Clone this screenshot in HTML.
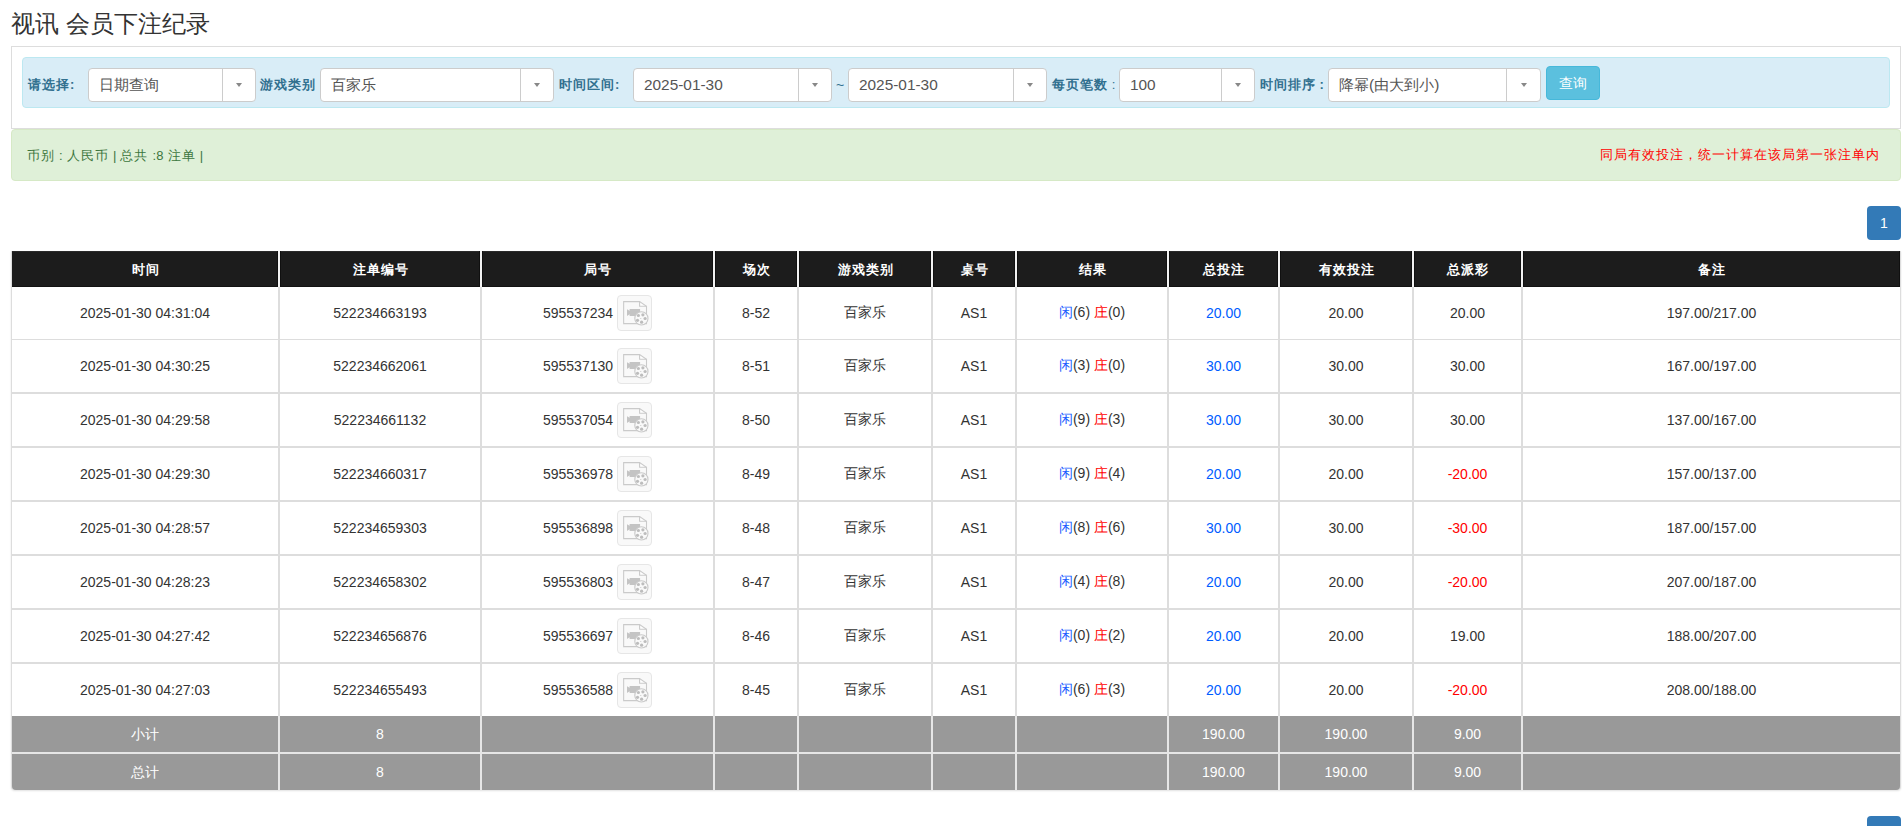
<!DOCTYPE html>
<html><head><meta charset="utf-8"><style>
html,body{margin:0;padding:0;background:#fff;width:1902px;height:826px;overflow:hidden;position:relative;font-family:"Liberation Sans", sans-serif}
</style></head><body>
<div class="title" style="position:absolute;left:11px;top:10px;font-size:24px;line-height:28px;color:#333;white-space:nowrap">视讯 会员下注纪录</div>
<div style="position:absolute;left:11px;top:46px;width:1890px;height:83px;border:1px solid #ddd;background:#fff;box-sizing:border-box"></div>
<div style="position:absolute;left:22px;top:57px;width:1868px;height:51px;border:1px solid #bce8f1;background:#d9edf7;border-radius:4px;box-sizing:border-box"></div>
<div style="position:absolute;left:28px;top:77px;font-size:13px;font-weight:bold;color:#31708f;white-space:nowrap;line-height:16px;letter-spacing:1px;">请选择:</div>
<div style="position:absolute;left:88px;top:68px;width:168px;height:34px;border:1px solid #ccc;border-radius:4px;background:#fff;box-sizing:border-box"><div style="position:absolute;left:133px;top:0;width:1px;height:32px;background:#ccc"></div><div style="position:absolute;left:147.0px;top:14px;width:0;height:0;border-left:3.5px solid transparent;border-right:3.5px solid transparent;border-top:4px solid #888"></div><div style="position:absolute;left:10px;top:7px;font-size:15.4px;line-height:18px;color:#555;white-space:nowrap">日期查询</div></div>
<div style="position:absolute;left:260px;top:77px;font-size:13px;font-weight:bold;color:#31708f;white-space:nowrap;line-height:16px;letter-spacing:1px;">游戏类别</div>
<div style="position:absolute;left:320px;top:68px;width:234px;height:34px;border:1px solid #ccc;border-radius:4px;background:#fff;box-sizing:border-box"><div style="position:absolute;left:199px;top:0;width:1px;height:32px;background:#ccc"></div><div style="position:absolute;left:213.0px;top:14px;width:0;height:0;border-left:3.5px solid transparent;border-right:3.5px solid transparent;border-top:4px solid #888"></div><div style="position:absolute;left:10px;top:7px;font-size:15.4px;line-height:18px;color:#555;white-space:nowrap">百家乐</div></div>
<div style="position:absolute;left:559px;top:77px;font-size:13px;font-weight:bold;color:#31708f;white-space:nowrap;line-height:16px;letter-spacing:1px;">时间区间:</div>
<div style="position:absolute;left:633px;top:68px;width:199px;height:34px;border:1px solid #ccc;border-radius:4px;background:#fff;box-sizing:border-box"><div style="position:absolute;left:164px;top:0;width:1px;height:32px;background:#ccc"></div><div style="position:absolute;left:178.0px;top:14px;width:0;height:0;border-left:3.5px solid transparent;border-right:3.5px solid transparent;border-top:4px solid #888"></div><div style="position:absolute;left:10px;top:7px;font-size:15.4px;line-height:18px;color:#555;white-space:nowrap">2025-01-30</div></div>
<div style="position:absolute;left:836px;top:77px;font-size:14px;color:#31708f;line-height:16px">~</div>
<div style="position:absolute;left:848px;top:68px;width:199px;height:34px;border:1px solid #ccc;border-radius:4px;background:#fff;box-sizing:border-box"><div style="position:absolute;left:164px;top:0;width:1px;height:32px;background:#ccc"></div><div style="position:absolute;left:178.0px;top:14px;width:0;height:0;border-left:3.5px solid transparent;border-right:3.5px solid transparent;border-top:4px solid #888"></div><div style="position:absolute;left:10px;top:7px;font-size:15.4px;line-height:18px;color:#555;white-space:nowrap">2025-01-30</div></div>
<div style="position:absolute;left:1052px;top:77px;font-size:13px;font-weight:bold;color:#31708f;white-space:nowrap;line-height:16px;letter-spacing:1px;letter-spacing:0"><span style="letter-spacing:1px">每页笔数</span> <span style="font-weight:normal">:</span></div>
<div style="position:absolute;left:1119px;top:68px;width:136px;height:34px;border:1px solid #ccc;border-radius:4px;background:#fff;box-sizing:border-box"><div style="position:absolute;left:101px;top:0;width:1px;height:32px;background:#ccc"></div><div style="position:absolute;left:115.0px;top:14px;width:0;height:0;border-left:3.5px solid transparent;border-right:3.5px solid transparent;border-top:4px solid #888"></div><div style="position:absolute;left:10px;top:7px;font-size:15.4px;line-height:18px;color:#555;white-space:nowrap">100</div></div>
<div style="position:absolute;left:1260px;top:77px;font-size:13px;font-weight:bold;color:#31708f;white-space:nowrap;line-height:16px;letter-spacing:1px;letter-spacing:0"><span style="letter-spacing:1px">时间排序</span> :</div>
<div style="position:absolute;left:1328px;top:68px;width:213px;height:34px;border:1px solid #ccc;border-radius:4px;background:#fff;box-sizing:border-box"><div style="position:absolute;left:177px;top:0;width:1px;height:32px;background:#ccc"></div><div style="position:absolute;left:191.5px;top:14px;width:0;height:0;border-left:3.5px solid transparent;border-right:3.5px solid transparent;border-top:4px solid #888"></div><div style="position:absolute;left:10px;top:7px;font-size:15.4px;line-height:18px;color:#555;white-space:nowrap">降幂(由大到小)</div></div>
<div style="position:absolute;left:1546px;top:66px;width:54px;height:34px;background:#5bc0de;border:1px solid #46b8da;border-radius:4px;box-sizing:border-box;color:#fff;font-size:14px;line-height:32px;text-align:center">查询</div>
<div style="position:absolute;left:11px;top:129px;width:1890px;height:52px;background:#dff0d8;border:1px solid #d6e9c6;border-radius:4px;box-sizing:border-box"></div>
<div style="position:absolute;left:27px;top:147px;font-size:13px;line-height:18px;color:#3c763d;white-space:nowrap;word-spacing:0.5px"><span style="letter-spacing:1px">币别</span> : <span style="letter-spacing:1px">人民币</span> | <span style="letter-spacing:1px">总共</span> :8 <span style="letter-spacing:1px">注单</span> |</div>
<div style="position:absolute;right:22px;top:146px;font-size:13px;line-height:18px;color:#f00;white-space:nowrap;letter-spacing:1px">同局有效投注，统一计算在该局第一张注单内</div>
<div style="position:absolute;left:1867px;top:206px;width:34px;height:34px;background:#337ab7;border-radius:4px;color:#fff;font-size:14px;line-height:34px;text-align:center">1</div>
<div style="position:absolute;left:1867px;top:816px;width:34px;height:34px;background:#337ab7;border-radius:4px"></div>
<div style="position:absolute;left:11px;top:251px;width:1890px;height:539px;background:#ddd;border-radius:0 0 4px 4px;box-shadow:0 1px 2px rgba(0,0,0,.12)"></div>
<div style="position:absolute;left:12px;top:251px;width:266px;height:36px;background:#1c1c1c;color:#fff;font-weight:bold;font-size:13px;line-height:38px;text-align:center;letter-spacing:1px;text-indent:1px;box-shadow:inset -1px 0 0 #101010, inset 0 1px 0 #2a2a2a, inset 0 -1px 0 #121212">时间</div>
<div style="position:absolute;left:280px;top:251px;width:200px;height:36px;background:#1c1c1c;color:#fff;font-weight:bold;font-size:13px;line-height:38px;text-align:center;letter-spacing:1px;text-indent:1px;box-shadow:inset 1px 0 0 #101010, inset -1px 0 0 #101010, inset 0 1px 0 #2a2a2a, inset 0 -1px 0 #121212">注单编号</div>
<div style="position:absolute;left:482px;top:251px;width:231px;height:36px;background:#1c1c1c;color:#fff;font-weight:bold;font-size:13px;line-height:38px;text-align:center;letter-spacing:1px;text-indent:1px;box-shadow:inset 1px 0 0 #101010, inset -1px 0 0 #101010, inset 0 1px 0 #2a2a2a, inset 0 -1px 0 #121212">局号</div>
<div style="position:absolute;left:715px;top:251px;width:82px;height:36px;background:#1c1c1c;color:#fff;font-weight:bold;font-size:13px;line-height:38px;text-align:center;letter-spacing:1px;text-indent:1px;box-shadow:inset 1px 0 0 #101010, inset -1px 0 0 #101010, inset 0 1px 0 #2a2a2a, inset 0 -1px 0 #121212">场次</div>
<div style="position:absolute;left:799px;top:251px;width:132px;height:36px;background:#1c1c1c;color:#fff;font-weight:bold;font-size:13px;line-height:38px;text-align:center;letter-spacing:1px;text-indent:1px;box-shadow:inset 1px 0 0 #101010, inset -1px 0 0 #101010, inset 0 1px 0 #2a2a2a, inset 0 -1px 0 #121212">游戏类别</div>
<div style="position:absolute;left:933px;top:251px;width:82px;height:36px;background:#1c1c1c;color:#fff;font-weight:bold;font-size:13px;line-height:38px;text-align:center;letter-spacing:1px;text-indent:1px;box-shadow:inset 1px 0 0 #101010, inset -1px 0 0 #101010, inset 0 1px 0 #2a2a2a, inset 0 -1px 0 #121212">桌号</div>
<div style="position:absolute;left:1017px;top:251px;width:150px;height:36px;background:#1c1c1c;color:#fff;font-weight:bold;font-size:13px;line-height:38px;text-align:center;letter-spacing:1px;text-indent:1px;box-shadow:inset 1px 0 0 #101010, inset -1px 0 0 #101010, inset 0 1px 0 #2a2a2a, inset 0 -1px 0 #121212">结果</div>
<div style="position:absolute;left:1169px;top:251px;width:109px;height:36px;background:#1c1c1c;color:#fff;font-weight:bold;font-size:13px;line-height:38px;text-align:center;letter-spacing:1px;text-indent:1px;box-shadow:inset 1px 0 0 #101010, inset -1px 0 0 #101010, inset 0 1px 0 #2a2a2a, inset 0 -1px 0 #121212">总投注</div>
<div style="position:absolute;left:1280px;top:251px;width:132px;height:36px;background:#1c1c1c;color:#fff;font-weight:bold;font-size:13px;line-height:38px;text-align:center;letter-spacing:1px;text-indent:1px;box-shadow:inset 1px 0 0 #101010, inset -1px 0 0 #101010, inset 0 1px 0 #2a2a2a, inset 0 -1px 0 #121212">有效投注</div>
<div style="position:absolute;left:1414px;top:251px;width:107px;height:36px;background:#1c1c1c;color:#fff;font-weight:bold;font-size:13px;line-height:38px;text-align:center;letter-spacing:1px;text-indent:1px;box-shadow:inset 1px 0 0 #101010, inset -1px 0 0 #101010, inset 0 1px 0 #2a2a2a, inset 0 -1px 0 #121212">总派彩</div>
<div style="position:absolute;left:1523px;top:251px;width:377px;height:36px;background:#1c1c1c;color:#fff;font-weight:bold;font-size:13px;line-height:38px;text-align:center;letter-spacing:1px;text-indent:1px;box-shadow:inset 1px 0 0 #101010, inset -1px 0 0 #101010, inset 0 1px 0 #2a2a2a, inset 0 -1px 0 #121212">备注</div>
<div style="position:absolute;left:278px;top:251px;width:2px;height:36px;background:#f2f2f2"></div>
<div style="position:absolute;left:480px;top:251px;width:2px;height:36px;background:#f2f2f2"></div>
<div style="position:absolute;left:713px;top:251px;width:2px;height:36px;background:#f2f2f2"></div>
<div style="position:absolute;left:797px;top:251px;width:2px;height:36px;background:#f2f2f2"></div>
<div style="position:absolute;left:931px;top:251px;width:2px;height:36px;background:#f2f2f2"></div>
<div style="position:absolute;left:1015px;top:251px;width:2px;height:36px;background:#f2f2f2"></div>
<div style="position:absolute;left:1167px;top:251px;width:2px;height:36px;background:#f2f2f2"></div>
<div style="position:absolute;left:1278px;top:251px;width:2px;height:36px;background:#f2f2f2"></div>
<div style="position:absolute;left:1412px;top:251px;width:2px;height:36px;background:#f2f2f2"></div>
<div style="position:absolute;left:1521px;top:251px;width:2px;height:36px;background:#f2f2f2"></div>
<div style="position:absolute;left:12px;top:287px;width:266px;height:52px;background:#fff;color:#333;font-size:14px;display:flex;align-items:center;justify-content:center;white-space:nowrap"><span style="position:relative;top:0px">2025-01-30 04:31:04</span></div>
<div style="position:absolute;left:280px;top:287px;width:200px;height:52px;background:#fff;color:#333;font-size:14px;display:flex;align-items:center;justify-content:center;white-space:nowrap"><span style="position:relative;top:0px">522234663193</span></div>
<div style="position:absolute;left:482px;top:287px;width:231px;height:52px;background:#fff;color:#333;font-size:14px;display:flex;align-items:center;justify-content:center;white-space:nowrap"><span style="position:relative;top:0px"><span style="display:flex;align-items:center"><span style="position:relative;top:0px">595537234</span><span style="display:inline-block;position:relative;width:35px;height:36px;box-sizing:border-box;border:1px solid #e6e6e6;border-radius:4px;background:#f9f9f9;margin-left:4px;top:0px"><svg width="35" height="35" viewBox="0 0 35 35" style="position:absolute;left:-1px;top:-1px"><path d="M22.6 6.7 V11.3 H29.5 Z" fill="#fff"/><g fill="none" stroke="#cacaca" stroke-width="1.1"><path d="M6.65 6.65 H22.6 L29.5 11.4 V28.65 H6.65 Z"/><path d="M22.6 6.65 V11.3 H29.5"/></g><path fill="#c4c4c4" d="M10 14.2 L12.6 15.8 V14 H23.1 V20.9 H12.6 V19.2 L10 20.9 Z"/><circle cx="24.4" cy="23.4" r="6.6" fill="#f9f9f9" stroke="#cacaca" stroke-width="1.1"/><g fill="#bdbdbd"><circle cx="21.4" cy="20.5" r="1.6"/><circle cx="25.9" cy="19.8" r="1.6"/><circle cx="28.1" cy="23.5" r="1.6"/><circle cx="24.6" cy="27.2" r="1.6"/><circle cx="20.5" cy="25.3" r="1.6"/><circle cx="23.8" cy="23.5" r="0.5"/></g></svg></span></span></span></div>
<div style="position:absolute;left:715px;top:287px;width:82px;height:52px;background:#fff;color:#333;font-size:14px;display:flex;align-items:center;justify-content:center;white-space:nowrap"><span style="position:relative;top:0px">8-52</span></div>
<div style="position:absolute;left:799px;top:287px;width:132px;height:52px;background:#fff;color:#333;font-size:14px;display:flex;align-items:center;justify-content:center;white-space:nowrap"><span style="position:relative;top:0px">百家乐</span></div>
<div style="position:absolute;left:933px;top:287px;width:82px;height:52px;background:#fff;color:#333;font-size:14px;display:flex;align-items:center;justify-content:center;white-space:nowrap"><span style="position:relative;top:0px">AS1</span></div>
<div style="position:absolute;left:1017px;top:287px;width:150px;height:52px;background:#fff;color:#333;font-size:14px;display:flex;align-items:center;justify-content:center;white-space:nowrap"><span style="position:relative;top:0px"><span style="color:#1a5cff">闲</span>(6) <span style="color:#f00">庄</span>(0)</span></div>
<div style="position:absolute;left:1169px;top:287px;width:109px;height:52px;background:#fff;color:#333;font-size:14px;display:flex;align-items:center;justify-content:center;white-space:nowrap"><span style="position:relative;top:0px"><span style="color:#005cff">20.00</span></span></div>
<div style="position:absolute;left:1280px;top:287px;width:132px;height:52px;background:#fff;color:#333;font-size:14px;display:flex;align-items:center;justify-content:center;white-space:nowrap"><span style="position:relative;top:0px">20.00</span></div>
<div style="position:absolute;left:1414px;top:287px;width:107px;height:52px;background:#fff;color:#333;font-size:14px;display:flex;align-items:center;justify-content:center;white-space:nowrap"><span style="position:relative;top:0px">20.00</span></div>
<div style="position:absolute;left:1523px;top:287px;width:377px;height:52px;background:#fff;color:#333;font-size:14px;display:flex;align-items:center;justify-content:center;white-space:nowrap"><span style="position:relative;top:0px">197.00/217.00</span></div>
<div style="position:absolute;left:12px;top:340px;width:266px;height:52px;background:#fff;color:#333;font-size:14px;display:flex;align-items:center;justify-content:center;white-space:nowrap"><span style="position:relative;top:0px">2025-01-30 04:30:25</span></div>
<div style="position:absolute;left:280px;top:340px;width:200px;height:52px;background:#fff;color:#333;font-size:14px;display:flex;align-items:center;justify-content:center;white-space:nowrap"><span style="position:relative;top:0px">522234662061</span></div>
<div style="position:absolute;left:482px;top:340px;width:231px;height:52px;background:#fff;color:#333;font-size:14px;display:flex;align-items:center;justify-content:center;white-space:nowrap"><span style="position:relative;top:0px"><span style="display:flex;align-items:center"><span style="position:relative;top:0px">595537130</span><span style="display:inline-block;position:relative;width:35px;height:36px;box-sizing:border-box;border:1px solid #e6e6e6;border-radius:4px;background:#f9f9f9;margin-left:4px;top:0px"><svg width="35" height="35" viewBox="0 0 35 35" style="position:absolute;left:-1px;top:-1px"><path d="M22.6 6.7 V11.3 H29.5 Z" fill="#fff"/><g fill="none" stroke="#cacaca" stroke-width="1.1"><path d="M6.65 6.65 H22.6 L29.5 11.4 V28.65 H6.65 Z"/><path d="M22.6 6.65 V11.3 H29.5"/></g><path fill="#c4c4c4" d="M10 14.2 L12.6 15.8 V14 H23.1 V20.9 H12.6 V19.2 L10 20.9 Z"/><circle cx="24.4" cy="23.4" r="6.6" fill="#f9f9f9" stroke="#cacaca" stroke-width="1.1"/><g fill="#bdbdbd"><circle cx="21.4" cy="20.5" r="1.6"/><circle cx="25.9" cy="19.8" r="1.6"/><circle cx="28.1" cy="23.5" r="1.6"/><circle cx="24.6" cy="27.2" r="1.6"/><circle cx="20.5" cy="25.3" r="1.6"/><circle cx="23.8" cy="23.5" r="0.5"/></g></svg></span></span></span></div>
<div style="position:absolute;left:715px;top:340px;width:82px;height:52px;background:#fff;color:#333;font-size:14px;display:flex;align-items:center;justify-content:center;white-space:nowrap"><span style="position:relative;top:0px">8-51</span></div>
<div style="position:absolute;left:799px;top:340px;width:132px;height:52px;background:#fff;color:#333;font-size:14px;display:flex;align-items:center;justify-content:center;white-space:nowrap"><span style="position:relative;top:0px">百家乐</span></div>
<div style="position:absolute;left:933px;top:340px;width:82px;height:52px;background:#fff;color:#333;font-size:14px;display:flex;align-items:center;justify-content:center;white-space:nowrap"><span style="position:relative;top:0px">AS1</span></div>
<div style="position:absolute;left:1017px;top:340px;width:150px;height:52px;background:#fff;color:#333;font-size:14px;display:flex;align-items:center;justify-content:center;white-space:nowrap"><span style="position:relative;top:0px"><span style="color:#1a5cff">闲</span>(3) <span style="color:#f00">庄</span>(0)</span></div>
<div style="position:absolute;left:1169px;top:340px;width:109px;height:52px;background:#fff;color:#333;font-size:14px;display:flex;align-items:center;justify-content:center;white-space:nowrap"><span style="position:relative;top:0px"><span style="color:#005cff">30.00</span></span></div>
<div style="position:absolute;left:1280px;top:340px;width:132px;height:52px;background:#fff;color:#333;font-size:14px;display:flex;align-items:center;justify-content:center;white-space:nowrap"><span style="position:relative;top:0px">30.00</span></div>
<div style="position:absolute;left:1414px;top:340px;width:107px;height:52px;background:#fff;color:#333;font-size:14px;display:flex;align-items:center;justify-content:center;white-space:nowrap"><span style="position:relative;top:0px">30.00</span></div>
<div style="position:absolute;left:1523px;top:340px;width:377px;height:52px;background:#fff;color:#333;font-size:14px;display:flex;align-items:center;justify-content:center;white-space:nowrap"><span style="position:relative;top:0px">167.00/197.00</span></div>
<div style="position:absolute;left:12px;top:394px;width:266px;height:52px;background:#fff;color:#333;font-size:14px;display:flex;align-items:center;justify-content:center;white-space:nowrap"><span style="position:relative;top:0px">2025-01-30 04:29:58</span></div>
<div style="position:absolute;left:280px;top:394px;width:200px;height:52px;background:#fff;color:#333;font-size:14px;display:flex;align-items:center;justify-content:center;white-space:nowrap"><span style="position:relative;top:0px">522234661132</span></div>
<div style="position:absolute;left:482px;top:394px;width:231px;height:52px;background:#fff;color:#333;font-size:14px;display:flex;align-items:center;justify-content:center;white-space:nowrap"><span style="position:relative;top:0px"><span style="display:flex;align-items:center"><span style="position:relative;top:0px">595537054</span><span style="display:inline-block;position:relative;width:35px;height:36px;box-sizing:border-box;border:1px solid #e6e6e6;border-radius:4px;background:#f9f9f9;margin-left:4px;top:0px"><svg width="35" height="35" viewBox="0 0 35 35" style="position:absolute;left:-1px;top:-1px"><path d="M22.6 6.7 V11.3 H29.5 Z" fill="#fff"/><g fill="none" stroke="#cacaca" stroke-width="1.1"><path d="M6.65 6.65 H22.6 L29.5 11.4 V28.65 H6.65 Z"/><path d="M22.6 6.65 V11.3 H29.5"/></g><path fill="#c4c4c4" d="M10 14.2 L12.6 15.8 V14 H23.1 V20.9 H12.6 V19.2 L10 20.9 Z"/><circle cx="24.4" cy="23.4" r="6.6" fill="#f9f9f9" stroke="#cacaca" stroke-width="1.1"/><g fill="#bdbdbd"><circle cx="21.4" cy="20.5" r="1.6"/><circle cx="25.9" cy="19.8" r="1.6"/><circle cx="28.1" cy="23.5" r="1.6"/><circle cx="24.6" cy="27.2" r="1.6"/><circle cx="20.5" cy="25.3" r="1.6"/><circle cx="23.8" cy="23.5" r="0.5"/></g></svg></span></span></span></div>
<div style="position:absolute;left:715px;top:394px;width:82px;height:52px;background:#fff;color:#333;font-size:14px;display:flex;align-items:center;justify-content:center;white-space:nowrap"><span style="position:relative;top:0px">8-50</span></div>
<div style="position:absolute;left:799px;top:394px;width:132px;height:52px;background:#fff;color:#333;font-size:14px;display:flex;align-items:center;justify-content:center;white-space:nowrap"><span style="position:relative;top:0px">百家乐</span></div>
<div style="position:absolute;left:933px;top:394px;width:82px;height:52px;background:#fff;color:#333;font-size:14px;display:flex;align-items:center;justify-content:center;white-space:nowrap"><span style="position:relative;top:0px">AS1</span></div>
<div style="position:absolute;left:1017px;top:394px;width:150px;height:52px;background:#fff;color:#333;font-size:14px;display:flex;align-items:center;justify-content:center;white-space:nowrap"><span style="position:relative;top:0px"><span style="color:#1a5cff">闲</span>(9) <span style="color:#f00">庄</span>(3)</span></div>
<div style="position:absolute;left:1169px;top:394px;width:109px;height:52px;background:#fff;color:#333;font-size:14px;display:flex;align-items:center;justify-content:center;white-space:nowrap"><span style="position:relative;top:0px"><span style="color:#005cff">30.00</span></span></div>
<div style="position:absolute;left:1280px;top:394px;width:132px;height:52px;background:#fff;color:#333;font-size:14px;display:flex;align-items:center;justify-content:center;white-space:nowrap"><span style="position:relative;top:0px">30.00</span></div>
<div style="position:absolute;left:1414px;top:394px;width:107px;height:52px;background:#fff;color:#333;font-size:14px;display:flex;align-items:center;justify-content:center;white-space:nowrap"><span style="position:relative;top:0px">30.00</span></div>
<div style="position:absolute;left:1523px;top:394px;width:377px;height:52px;background:#fff;color:#333;font-size:14px;display:flex;align-items:center;justify-content:center;white-space:nowrap"><span style="position:relative;top:0px">137.00/167.00</span></div>
<div style="position:absolute;left:12px;top:448px;width:266px;height:52px;background:#fff;color:#333;font-size:14px;display:flex;align-items:center;justify-content:center;white-space:nowrap"><span style="position:relative;top:0px">2025-01-30 04:29:30</span></div>
<div style="position:absolute;left:280px;top:448px;width:200px;height:52px;background:#fff;color:#333;font-size:14px;display:flex;align-items:center;justify-content:center;white-space:nowrap"><span style="position:relative;top:0px">522234660317</span></div>
<div style="position:absolute;left:482px;top:448px;width:231px;height:52px;background:#fff;color:#333;font-size:14px;display:flex;align-items:center;justify-content:center;white-space:nowrap"><span style="position:relative;top:0px"><span style="display:flex;align-items:center"><span style="position:relative;top:0px">595536978</span><span style="display:inline-block;position:relative;width:35px;height:36px;box-sizing:border-box;border:1px solid #e6e6e6;border-radius:4px;background:#f9f9f9;margin-left:4px;top:0px"><svg width="35" height="35" viewBox="0 0 35 35" style="position:absolute;left:-1px;top:-1px"><path d="M22.6 6.7 V11.3 H29.5 Z" fill="#fff"/><g fill="none" stroke="#cacaca" stroke-width="1.1"><path d="M6.65 6.65 H22.6 L29.5 11.4 V28.65 H6.65 Z"/><path d="M22.6 6.65 V11.3 H29.5"/></g><path fill="#c4c4c4" d="M10 14.2 L12.6 15.8 V14 H23.1 V20.9 H12.6 V19.2 L10 20.9 Z"/><circle cx="24.4" cy="23.4" r="6.6" fill="#f9f9f9" stroke="#cacaca" stroke-width="1.1"/><g fill="#bdbdbd"><circle cx="21.4" cy="20.5" r="1.6"/><circle cx="25.9" cy="19.8" r="1.6"/><circle cx="28.1" cy="23.5" r="1.6"/><circle cx="24.6" cy="27.2" r="1.6"/><circle cx="20.5" cy="25.3" r="1.6"/><circle cx="23.8" cy="23.5" r="0.5"/></g></svg></span></span></span></div>
<div style="position:absolute;left:715px;top:448px;width:82px;height:52px;background:#fff;color:#333;font-size:14px;display:flex;align-items:center;justify-content:center;white-space:nowrap"><span style="position:relative;top:0px">8-49</span></div>
<div style="position:absolute;left:799px;top:448px;width:132px;height:52px;background:#fff;color:#333;font-size:14px;display:flex;align-items:center;justify-content:center;white-space:nowrap"><span style="position:relative;top:0px">百家乐</span></div>
<div style="position:absolute;left:933px;top:448px;width:82px;height:52px;background:#fff;color:#333;font-size:14px;display:flex;align-items:center;justify-content:center;white-space:nowrap"><span style="position:relative;top:0px">AS1</span></div>
<div style="position:absolute;left:1017px;top:448px;width:150px;height:52px;background:#fff;color:#333;font-size:14px;display:flex;align-items:center;justify-content:center;white-space:nowrap"><span style="position:relative;top:0px"><span style="color:#1a5cff">闲</span>(9) <span style="color:#f00">庄</span>(4)</span></div>
<div style="position:absolute;left:1169px;top:448px;width:109px;height:52px;background:#fff;color:#333;font-size:14px;display:flex;align-items:center;justify-content:center;white-space:nowrap"><span style="position:relative;top:0px"><span style="color:#005cff">20.00</span></span></div>
<div style="position:absolute;left:1280px;top:448px;width:132px;height:52px;background:#fff;color:#333;font-size:14px;display:flex;align-items:center;justify-content:center;white-space:nowrap"><span style="position:relative;top:0px">20.00</span></div>
<div style="position:absolute;left:1414px;top:448px;width:107px;height:52px;background:#fff;color:#333;font-size:14px;display:flex;align-items:center;justify-content:center;white-space:nowrap"><span style="position:relative;top:0px"><span style="color:#f00">-20.00</span></span></div>
<div style="position:absolute;left:1523px;top:448px;width:377px;height:52px;background:#fff;color:#333;font-size:14px;display:flex;align-items:center;justify-content:center;white-space:nowrap"><span style="position:relative;top:0px">157.00/137.00</span></div>
<div style="position:absolute;left:12px;top:502px;width:266px;height:52px;background:#fff;color:#333;font-size:14px;display:flex;align-items:center;justify-content:center;white-space:nowrap"><span style="position:relative;top:0px">2025-01-30 04:28:57</span></div>
<div style="position:absolute;left:280px;top:502px;width:200px;height:52px;background:#fff;color:#333;font-size:14px;display:flex;align-items:center;justify-content:center;white-space:nowrap"><span style="position:relative;top:0px">522234659303</span></div>
<div style="position:absolute;left:482px;top:502px;width:231px;height:52px;background:#fff;color:#333;font-size:14px;display:flex;align-items:center;justify-content:center;white-space:nowrap"><span style="position:relative;top:0px"><span style="display:flex;align-items:center"><span style="position:relative;top:0px">595536898</span><span style="display:inline-block;position:relative;width:35px;height:36px;box-sizing:border-box;border:1px solid #e6e6e6;border-radius:4px;background:#f9f9f9;margin-left:4px;top:0px"><svg width="35" height="35" viewBox="0 0 35 35" style="position:absolute;left:-1px;top:-1px"><path d="M22.6 6.7 V11.3 H29.5 Z" fill="#fff"/><g fill="none" stroke="#cacaca" stroke-width="1.1"><path d="M6.65 6.65 H22.6 L29.5 11.4 V28.65 H6.65 Z"/><path d="M22.6 6.65 V11.3 H29.5"/></g><path fill="#c4c4c4" d="M10 14.2 L12.6 15.8 V14 H23.1 V20.9 H12.6 V19.2 L10 20.9 Z"/><circle cx="24.4" cy="23.4" r="6.6" fill="#f9f9f9" stroke="#cacaca" stroke-width="1.1"/><g fill="#bdbdbd"><circle cx="21.4" cy="20.5" r="1.6"/><circle cx="25.9" cy="19.8" r="1.6"/><circle cx="28.1" cy="23.5" r="1.6"/><circle cx="24.6" cy="27.2" r="1.6"/><circle cx="20.5" cy="25.3" r="1.6"/><circle cx="23.8" cy="23.5" r="0.5"/></g></svg></span></span></span></div>
<div style="position:absolute;left:715px;top:502px;width:82px;height:52px;background:#fff;color:#333;font-size:14px;display:flex;align-items:center;justify-content:center;white-space:nowrap"><span style="position:relative;top:0px">8-48</span></div>
<div style="position:absolute;left:799px;top:502px;width:132px;height:52px;background:#fff;color:#333;font-size:14px;display:flex;align-items:center;justify-content:center;white-space:nowrap"><span style="position:relative;top:0px">百家乐</span></div>
<div style="position:absolute;left:933px;top:502px;width:82px;height:52px;background:#fff;color:#333;font-size:14px;display:flex;align-items:center;justify-content:center;white-space:nowrap"><span style="position:relative;top:0px">AS1</span></div>
<div style="position:absolute;left:1017px;top:502px;width:150px;height:52px;background:#fff;color:#333;font-size:14px;display:flex;align-items:center;justify-content:center;white-space:nowrap"><span style="position:relative;top:0px"><span style="color:#1a5cff">闲</span>(8) <span style="color:#f00">庄</span>(6)</span></div>
<div style="position:absolute;left:1169px;top:502px;width:109px;height:52px;background:#fff;color:#333;font-size:14px;display:flex;align-items:center;justify-content:center;white-space:nowrap"><span style="position:relative;top:0px"><span style="color:#005cff">30.00</span></span></div>
<div style="position:absolute;left:1280px;top:502px;width:132px;height:52px;background:#fff;color:#333;font-size:14px;display:flex;align-items:center;justify-content:center;white-space:nowrap"><span style="position:relative;top:0px">30.00</span></div>
<div style="position:absolute;left:1414px;top:502px;width:107px;height:52px;background:#fff;color:#333;font-size:14px;display:flex;align-items:center;justify-content:center;white-space:nowrap"><span style="position:relative;top:0px"><span style="color:#f00">-30.00</span></span></div>
<div style="position:absolute;left:1523px;top:502px;width:377px;height:52px;background:#fff;color:#333;font-size:14px;display:flex;align-items:center;justify-content:center;white-space:nowrap"><span style="position:relative;top:0px">187.00/157.00</span></div>
<div style="position:absolute;left:12px;top:556px;width:266px;height:52px;background:#fff;color:#333;font-size:14px;display:flex;align-items:center;justify-content:center;white-space:nowrap"><span style="position:relative;top:0px">2025-01-30 04:28:23</span></div>
<div style="position:absolute;left:280px;top:556px;width:200px;height:52px;background:#fff;color:#333;font-size:14px;display:flex;align-items:center;justify-content:center;white-space:nowrap"><span style="position:relative;top:0px">522234658302</span></div>
<div style="position:absolute;left:482px;top:556px;width:231px;height:52px;background:#fff;color:#333;font-size:14px;display:flex;align-items:center;justify-content:center;white-space:nowrap"><span style="position:relative;top:0px"><span style="display:flex;align-items:center"><span style="position:relative;top:0px">595536803</span><span style="display:inline-block;position:relative;width:35px;height:36px;box-sizing:border-box;border:1px solid #e6e6e6;border-radius:4px;background:#f9f9f9;margin-left:4px;top:0px"><svg width="35" height="35" viewBox="0 0 35 35" style="position:absolute;left:-1px;top:-1px"><path d="M22.6 6.7 V11.3 H29.5 Z" fill="#fff"/><g fill="none" stroke="#cacaca" stroke-width="1.1"><path d="M6.65 6.65 H22.6 L29.5 11.4 V28.65 H6.65 Z"/><path d="M22.6 6.65 V11.3 H29.5"/></g><path fill="#c4c4c4" d="M10 14.2 L12.6 15.8 V14 H23.1 V20.9 H12.6 V19.2 L10 20.9 Z"/><circle cx="24.4" cy="23.4" r="6.6" fill="#f9f9f9" stroke="#cacaca" stroke-width="1.1"/><g fill="#bdbdbd"><circle cx="21.4" cy="20.5" r="1.6"/><circle cx="25.9" cy="19.8" r="1.6"/><circle cx="28.1" cy="23.5" r="1.6"/><circle cx="24.6" cy="27.2" r="1.6"/><circle cx="20.5" cy="25.3" r="1.6"/><circle cx="23.8" cy="23.5" r="0.5"/></g></svg></span></span></span></div>
<div style="position:absolute;left:715px;top:556px;width:82px;height:52px;background:#fff;color:#333;font-size:14px;display:flex;align-items:center;justify-content:center;white-space:nowrap"><span style="position:relative;top:0px">8-47</span></div>
<div style="position:absolute;left:799px;top:556px;width:132px;height:52px;background:#fff;color:#333;font-size:14px;display:flex;align-items:center;justify-content:center;white-space:nowrap"><span style="position:relative;top:0px">百家乐</span></div>
<div style="position:absolute;left:933px;top:556px;width:82px;height:52px;background:#fff;color:#333;font-size:14px;display:flex;align-items:center;justify-content:center;white-space:nowrap"><span style="position:relative;top:0px">AS1</span></div>
<div style="position:absolute;left:1017px;top:556px;width:150px;height:52px;background:#fff;color:#333;font-size:14px;display:flex;align-items:center;justify-content:center;white-space:nowrap"><span style="position:relative;top:0px"><span style="color:#1a5cff">闲</span>(4) <span style="color:#f00">庄</span>(8)</span></div>
<div style="position:absolute;left:1169px;top:556px;width:109px;height:52px;background:#fff;color:#333;font-size:14px;display:flex;align-items:center;justify-content:center;white-space:nowrap"><span style="position:relative;top:0px"><span style="color:#005cff">20.00</span></span></div>
<div style="position:absolute;left:1280px;top:556px;width:132px;height:52px;background:#fff;color:#333;font-size:14px;display:flex;align-items:center;justify-content:center;white-space:nowrap"><span style="position:relative;top:0px">20.00</span></div>
<div style="position:absolute;left:1414px;top:556px;width:107px;height:52px;background:#fff;color:#333;font-size:14px;display:flex;align-items:center;justify-content:center;white-space:nowrap"><span style="position:relative;top:0px"><span style="color:#f00">-20.00</span></span></div>
<div style="position:absolute;left:1523px;top:556px;width:377px;height:52px;background:#fff;color:#333;font-size:14px;display:flex;align-items:center;justify-content:center;white-space:nowrap"><span style="position:relative;top:0px">207.00/187.00</span></div>
<div style="position:absolute;left:12px;top:610px;width:266px;height:52px;background:#fff;color:#333;font-size:14px;display:flex;align-items:center;justify-content:center;white-space:nowrap"><span style="position:relative;top:0px">2025-01-30 04:27:42</span></div>
<div style="position:absolute;left:280px;top:610px;width:200px;height:52px;background:#fff;color:#333;font-size:14px;display:flex;align-items:center;justify-content:center;white-space:nowrap"><span style="position:relative;top:0px">522234656876</span></div>
<div style="position:absolute;left:482px;top:610px;width:231px;height:52px;background:#fff;color:#333;font-size:14px;display:flex;align-items:center;justify-content:center;white-space:nowrap"><span style="position:relative;top:0px"><span style="display:flex;align-items:center"><span style="position:relative;top:0px">595536697</span><span style="display:inline-block;position:relative;width:35px;height:36px;box-sizing:border-box;border:1px solid #e6e6e6;border-radius:4px;background:#f9f9f9;margin-left:4px;top:0px"><svg width="35" height="35" viewBox="0 0 35 35" style="position:absolute;left:-1px;top:-1px"><path d="M22.6 6.7 V11.3 H29.5 Z" fill="#fff"/><g fill="none" stroke="#cacaca" stroke-width="1.1"><path d="M6.65 6.65 H22.6 L29.5 11.4 V28.65 H6.65 Z"/><path d="M22.6 6.65 V11.3 H29.5"/></g><path fill="#c4c4c4" d="M10 14.2 L12.6 15.8 V14 H23.1 V20.9 H12.6 V19.2 L10 20.9 Z"/><circle cx="24.4" cy="23.4" r="6.6" fill="#f9f9f9" stroke="#cacaca" stroke-width="1.1"/><g fill="#bdbdbd"><circle cx="21.4" cy="20.5" r="1.6"/><circle cx="25.9" cy="19.8" r="1.6"/><circle cx="28.1" cy="23.5" r="1.6"/><circle cx="24.6" cy="27.2" r="1.6"/><circle cx="20.5" cy="25.3" r="1.6"/><circle cx="23.8" cy="23.5" r="0.5"/></g></svg></span></span></span></div>
<div style="position:absolute;left:715px;top:610px;width:82px;height:52px;background:#fff;color:#333;font-size:14px;display:flex;align-items:center;justify-content:center;white-space:nowrap"><span style="position:relative;top:0px">8-46</span></div>
<div style="position:absolute;left:799px;top:610px;width:132px;height:52px;background:#fff;color:#333;font-size:14px;display:flex;align-items:center;justify-content:center;white-space:nowrap"><span style="position:relative;top:0px">百家乐</span></div>
<div style="position:absolute;left:933px;top:610px;width:82px;height:52px;background:#fff;color:#333;font-size:14px;display:flex;align-items:center;justify-content:center;white-space:nowrap"><span style="position:relative;top:0px">AS1</span></div>
<div style="position:absolute;left:1017px;top:610px;width:150px;height:52px;background:#fff;color:#333;font-size:14px;display:flex;align-items:center;justify-content:center;white-space:nowrap"><span style="position:relative;top:0px"><span style="color:#1a5cff">闲</span>(0) <span style="color:#f00">庄</span>(2)</span></div>
<div style="position:absolute;left:1169px;top:610px;width:109px;height:52px;background:#fff;color:#333;font-size:14px;display:flex;align-items:center;justify-content:center;white-space:nowrap"><span style="position:relative;top:0px"><span style="color:#005cff">20.00</span></span></div>
<div style="position:absolute;left:1280px;top:610px;width:132px;height:52px;background:#fff;color:#333;font-size:14px;display:flex;align-items:center;justify-content:center;white-space:nowrap"><span style="position:relative;top:0px">20.00</span></div>
<div style="position:absolute;left:1414px;top:610px;width:107px;height:52px;background:#fff;color:#333;font-size:14px;display:flex;align-items:center;justify-content:center;white-space:nowrap"><span style="position:relative;top:0px">19.00</span></div>
<div style="position:absolute;left:1523px;top:610px;width:377px;height:52px;background:#fff;color:#333;font-size:14px;display:flex;align-items:center;justify-content:center;white-space:nowrap"><span style="position:relative;top:0px">188.00/207.00</span></div>
<div style="position:absolute;left:12px;top:664px;width:266px;height:52px;background:#fff;color:#333;font-size:14px;display:flex;align-items:center;justify-content:center;white-space:nowrap"><span style="position:relative;top:0px">2025-01-30 04:27:03</span></div>
<div style="position:absolute;left:280px;top:664px;width:200px;height:52px;background:#fff;color:#333;font-size:14px;display:flex;align-items:center;justify-content:center;white-space:nowrap"><span style="position:relative;top:0px">522234655493</span></div>
<div style="position:absolute;left:482px;top:664px;width:231px;height:52px;background:#fff;color:#333;font-size:14px;display:flex;align-items:center;justify-content:center;white-space:nowrap"><span style="position:relative;top:0px"><span style="display:flex;align-items:center"><span style="position:relative;top:0px">595536588</span><span style="display:inline-block;position:relative;width:35px;height:36px;box-sizing:border-box;border:1px solid #e6e6e6;border-radius:4px;background:#f9f9f9;margin-left:4px;top:0px"><svg width="35" height="35" viewBox="0 0 35 35" style="position:absolute;left:-1px;top:-1px"><path d="M22.6 6.7 V11.3 H29.5 Z" fill="#fff"/><g fill="none" stroke="#cacaca" stroke-width="1.1"><path d="M6.65 6.65 H22.6 L29.5 11.4 V28.65 H6.65 Z"/><path d="M22.6 6.65 V11.3 H29.5"/></g><path fill="#c4c4c4" d="M10 14.2 L12.6 15.8 V14 H23.1 V20.9 H12.6 V19.2 L10 20.9 Z"/><circle cx="24.4" cy="23.4" r="6.6" fill="#f9f9f9" stroke="#cacaca" stroke-width="1.1"/><g fill="#bdbdbd"><circle cx="21.4" cy="20.5" r="1.6"/><circle cx="25.9" cy="19.8" r="1.6"/><circle cx="28.1" cy="23.5" r="1.6"/><circle cx="24.6" cy="27.2" r="1.6"/><circle cx="20.5" cy="25.3" r="1.6"/><circle cx="23.8" cy="23.5" r="0.5"/></g></svg></span></span></span></div>
<div style="position:absolute;left:715px;top:664px;width:82px;height:52px;background:#fff;color:#333;font-size:14px;display:flex;align-items:center;justify-content:center;white-space:nowrap"><span style="position:relative;top:0px">8-45</span></div>
<div style="position:absolute;left:799px;top:664px;width:132px;height:52px;background:#fff;color:#333;font-size:14px;display:flex;align-items:center;justify-content:center;white-space:nowrap"><span style="position:relative;top:0px">百家乐</span></div>
<div style="position:absolute;left:933px;top:664px;width:82px;height:52px;background:#fff;color:#333;font-size:14px;display:flex;align-items:center;justify-content:center;white-space:nowrap"><span style="position:relative;top:0px">AS1</span></div>
<div style="position:absolute;left:1017px;top:664px;width:150px;height:52px;background:#fff;color:#333;font-size:14px;display:flex;align-items:center;justify-content:center;white-space:nowrap"><span style="position:relative;top:0px"><span style="color:#1a5cff">闲</span>(6) <span style="color:#f00">庄</span>(3)</span></div>
<div style="position:absolute;left:1169px;top:664px;width:109px;height:52px;background:#fff;color:#333;font-size:14px;display:flex;align-items:center;justify-content:center;white-space:nowrap"><span style="position:relative;top:0px"><span style="color:#005cff">20.00</span></span></div>
<div style="position:absolute;left:1280px;top:664px;width:132px;height:52px;background:#fff;color:#333;font-size:14px;display:flex;align-items:center;justify-content:center;white-space:nowrap"><span style="position:relative;top:0px">20.00</span></div>
<div style="position:absolute;left:1414px;top:664px;width:107px;height:52px;background:#fff;color:#333;font-size:14px;display:flex;align-items:center;justify-content:center;white-space:nowrap"><span style="position:relative;top:0px"><span style="color:#f00">-20.00</span></span></div>
<div style="position:absolute;left:1523px;top:664px;width:377px;height:52px;background:#fff;color:#333;font-size:14px;display:flex;align-items:center;justify-content:center;white-space:nowrap"><span style="position:relative;top:0px">208.00/188.00</span></div>
<div style="position:absolute;left:12px;top:716px;width:266px;height:36px;background:#999;color:#fff;font-size:14px;display:flex;align-items:center;justify-content:center;white-space:nowrap;"><span><span style="position:relative;top:1px">小计</span></span></div>
<div style="position:absolute;left:280px;top:716px;width:200px;height:36px;background:#999;color:#fff;font-size:14px;display:flex;align-items:center;justify-content:center;white-space:nowrap;"><span>8</span></div>
<div style="position:absolute;left:482px;top:716px;width:231px;height:36px;background:#999;color:#fff;font-size:14px;display:flex;align-items:center;justify-content:center;white-space:nowrap;"><span></span></div>
<div style="position:absolute;left:715px;top:716px;width:82px;height:36px;background:#999;color:#fff;font-size:14px;display:flex;align-items:center;justify-content:center;white-space:nowrap;"><span></span></div>
<div style="position:absolute;left:799px;top:716px;width:132px;height:36px;background:#999;color:#fff;font-size:14px;display:flex;align-items:center;justify-content:center;white-space:nowrap;"><span></span></div>
<div style="position:absolute;left:933px;top:716px;width:82px;height:36px;background:#999;color:#fff;font-size:14px;display:flex;align-items:center;justify-content:center;white-space:nowrap;"><span></span></div>
<div style="position:absolute;left:1017px;top:716px;width:150px;height:36px;background:#999;color:#fff;font-size:14px;display:flex;align-items:center;justify-content:center;white-space:nowrap;"><span></span></div>
<div style="position:absolute;left:1169px;top:716px;width:109px;height:36px;background:#999;color:#fff;font-size:14px;display:flex;align-items:center;justify-content:center;white-space:nowrap;"><span>190.00</span></div>
<div style="position:absolute;left:1280px;top:716px;width:132px;height:36px;background:#999;color:#fff;font-size:14px;display:flex;align-items:center;justify-content:center;white-space:nowrap;"><span>190.00</span></div>
<div style="position:absolute;left:1414px;top:716px;width:107px;height:36px;background:#999;color:#fff;font-size:14px;display:flex;align-items:center;justify-content:center;white-space:nowrap;"><span>9.00</span></div>
<div style="position:absolute;left:1523px;top:716px;width:377px;height:36px;background:#999;color:#fff;font-size:14px;display:flex;align-items:center;justify-content:center;white-space:nowrap;"><span></span></div>
<div style="position:absolute;left:12px;top:754px;width:266px;height:36px;background:#999;color:#fff;font-size:14px;display:flex;align-items:center;justify-content:center;white-space:nowrap;border-bottom-left-radius:4px;"><span><span style="position:relative;top:1px">总计</span></span></div>
<div style="position:absolute;left:280px;top:754px;width:200px;height:36px;background:#999;color:#fff;font-size:14px;display:flex;align-items:center;justify-content:center;white-space:nowrap;"><span>8</span></div>
<div style="position:absolute;left:482px;top:754px;width:231px;height:36px;background:#999;color:#fff;font-size:14px;display:flex;align-items:center;justify-content:center;white-space:nowrap;"><span></span></div>
<div style="position:absolute;left:715px;top:754px;width:82px;height:36px;background:#999;color:#fff;font-size:14px;display:flex;align-items:center;justify-content:center;white-space:nowrap;"><span></span></div>
<div style="position:absolute;left:799px;top:754px;width:132px;height:36px;background:#999;color:#fff;font-size:14px;display:flex;align-items:center;justify-content:center;white-space:nowrap;"><span></span></div>
<div style="position:absolute;left:933px;top:754px;width:82px;height:36px;background:#999;color:#fff;font-size:14px;display:flex;align-items:center;justify-content:center;white-space:nowrap;"><span></span></div>
<div style="position:absolute;left:1017px;top:754px;width:150px;height:36px;background:#999;color:#fff;font-size:14px;display:flex;align-items:center;justify-content:center;white-space:nowrap;"><span></span></div>
<div style="position:absolute;left:1169px;top:754px;width:109px;height:36px;background:#999;color:#fff;font-size:14px;display:flex;align-items:center;justify-content:center;white-space:nowrap;"><span>190.00</span></div>
<div style="position:absolute;left:1280px;top:754px;width:132px;height:36px;background:#999;color:#fff;font-size:14px;display:flex;align-items:center;justify-content:center;white-space:nowrap;"><span>190.00</span></div>
<div style="position:absolute;left:1414px;top:754px;width:107px;height:36px;background:#999;color:#fff;font-size:14px;display:flex;align-items:center;justify-content:center;white-space:nowrap;"><span>9.00</span></div>
<div style="position:absolute;left:1523px;top:754px;width:377px;height:36px;background:#999;color:#fff;font-size:14px;display:flex;align-items:center;justify-content:center;white-space:nowrap;border-bottom-right-radius:4px;"><span></span></div>
<div style="position:absolute;left:12px;top:752px;width:1888px;height:2px;background:#e6e6e6"></div>
<div style="position:absolute;left:278px;top:716px;width:2px;height:74px;background:#e6e6e6"></div>
<div style="position:absolute;left:480px;top:716px;width:2px;height:74px;background:#e6e6e6"></div>
<div style="position:absolute;left:713px;top:716px;width:2px;height:74px;background:#e6e6e6"></div>
<div style="position:absolute;left:797px;top:716px;width:2px;height:74px;background:#e6e6e6"></div>
<div style="position:absolute;left:931px;top:716px;width:2px;height:74px;background:#e6e6e6"></div>
<div style="position:absolute;left:1015px;top:716px;width:2px;height:74px;background:#e6e6e6"></div>
<div style="position:absolute;left:1167px;top:716px;width:2px;height:74px;background:#e6e6e6"></div>
<div style="position:absolute;left:1278px;top:716px;width:2px;height:74px;background:#e6e6e6"></div>
<div style="position:absolute;left:1412px;top:716px;width:2px;height:74px;background:#e6e6e6"></div>
<div style="position:absolute;left:1521px;top:716px;width:2px;height:74px;background:#e6e6e6"></div>
</body></html>
